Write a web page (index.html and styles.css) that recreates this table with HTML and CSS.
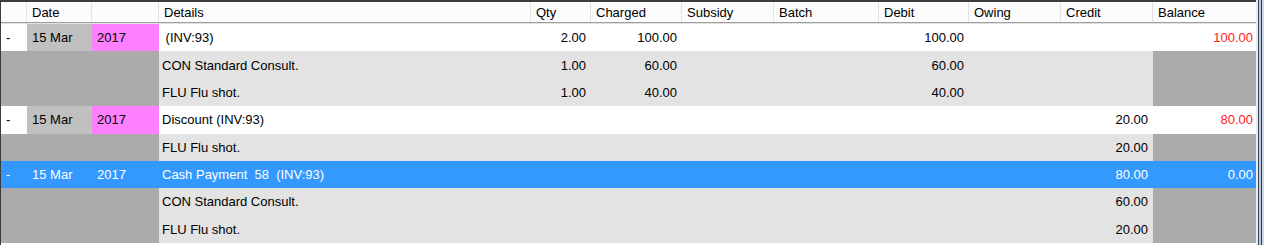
FILE: index.html
```html
<!DOCTYPE html>
<html>
<head>
<meta charset="utf-8">
<link rel="stylesheet" href="styles.css">
</head>
<body>
<div class="window">
  <div class="grid">
    <div class="row head">
      <div class="cell"></div>
      <div class="cell">Date</div>
      <div class="cell"></div>
      <div class="cell">Details</div>
      <div class="cell">Qty</div>
      <div class="cell">Charged</div>
      <div class="cell">Subsidy</div>
      <div class="cell">Batch</div>
      <div class="cell">Debit</div>
      <div class="cell">Owing</div>
      <div class="cell">Credit</div>
      <div class="cell">Balance</div>
    </div>

    <div class="row main">
      <div class="cell ind">-</div>
      <div class="cell date">15 Mar</div>
      <div class="cell year">2017</div>
      <div class="cell det"> (INV:93)</div>
      <div class="cell num">2.00</div>
      <div class="cell num">100.00</div>
      <div class="cell num"></div>
      <div class="cell num"></div>
      <div class="cell num">100.00</div>
      <div class="cell num"></div>
      <div class="cell num"></div>
      <div class="cell num bal red">100.00</div>
    </div>

    <div class="row sub">
      <div class="cell ind"></div>
      <div class="cell date"></div>
      <div class="cell year"></div>
      <div class="cell det">CON Standard Consult.</div>
      <div class="cell num">1.00</div>
      <div class="cell num">60.00</div>
      <div class="cell num"></div>
      <div class="cell num"></div>
      <div class="cell num">60.00</div>
      <div class="cell num"></div>
      <div class="cell num"></div>
      <div class="cell num bal"></div>
    </div>

    <div class="row sub">
      <div class="cell ind"></div>
      <div class="cell date"></div>
      <div class="cell year"></div>
      <div class="cell det">FLU Flu shot.</div>
      <div class="cell num">1.00</div>
      <div class="cell num">40.00</div>
      <div class="cell num"></div>
      <div class="cell num"></div>
      <div class="cell num">40.00</div>
      <div class="cell num"></div>
      <div class="cell num"></div>
      <div class="cell num bal"></div>
    </div>

    <div class="row main">
      <div class="cell ind">-</div>
      <div class="cell date">15 Mar</div>
      <div class="cell year">2017</div>
      <div class="cell det">Discount (INV:93)</div>
      <div class="cell num"></div>
      <div class="cell num"></div>
      <div class="cell num"></div>
      <div class="cell num"></div>
      <div class="cell num"></div>
      <div class="cell num"></div>
      <div class="cell num">20.00</div>
      <div class="cell num bal red">80.00</div>
    </div>

    <div class="row sub">
      <div class="cell ind"></div>
      <div class="cell date"></div>
      <div class="cell year"></div>
      <div class="cell det">FLU Flu shot.</div>
      <div class="cell num"></div>
      <div class="cell num"></div>
      <div class="cell num"></div>
      <div class="cell num"></div>
      <div class="cell num"></div>
      <div class="cell num"></div>
      <div class="cell num">20.00</div>
      <div class="cell num bal"></div>
    </div>

    <div class="row sel">
      <div class="cell ind">-</div>
      <div class="cell date">15 Mar</div>
      <div class="cell year">2017</div>
      <div class="cell det">Cash Payment  58  (INV:93)</div>
      <div class="cell num"></div>
      <div class="cell num"></div>
      <div class="cell num"></div>
      <div class="cell num"></div>
      <div class="cell num"></div>
      <div class="cell num"></div>
      <div class="cell num">80.00</div>
      <div class="cell num bal">0.00</div>
    </div>

    <div class="row sub">
      <div class="cell ind"></div>
      <div class="cell date"></div>
      <div class="cell year"></div>
      <div class="cell det">CON Standard Consult.</div>
      <div class="cell num"></div>
      <div class="cell num"></div>
      <div class="cell num"></div>
      <div class="cell num"></div>
      <div class="cell num"></div>
      <div class="cell num"></div>
      <div class="cell num">60.00</div>
      <div class="cell num bal"></div>
    </div>

    <div class="row sub">
      <div class="cell ind"></div>
      <div class="cell date"></div>
      <div class="cell year"></div>
      <div class="cell det">FLU Flu shot.</div>
      <div class="cell num"></div>
      <div class="cell num"></div>
      <div class="cell num"></div>
      <div class="cell num"></div>
      <div class="cell num"></div>
      <div class="cell num"></div>
      <div class="cell num">20.00</div>
      <div class="cell num bal"></div>
    </div>
  </div>
  <div class="frame"></div>
</div>
</body>
</html>
```

FILE: styles.css
```css
html, body {
  margin: 0;
  padding: 0;
  background: #ffffff;
}

body {
  font-family: "Liberation Sans", Arial, sans-serif;
  font-size: 13px;
  color: #000000;
}

.window {
  display: flex;
  width: 1264px;
  height: 245px;
  background: #ffffff;
}

.grid {
  width: 1255px;
  height: 243px;
  border-left: 1px solid #3c3c3c;
  border-top: 2px solid #3c3c3c;
  box-sizing: content-box;
  display: flex;
  flex-direction: column;
  align-self: flex-start;
}

.frame {
  width: 8px;
  height: 245px;
  background: linear-gradient(to right,
    #e8ecf0 0, #e8ecf0 2px,
    #3a4350 2px, #3a4350 3px,
    #b8cce4 3px, #b8cce4 5px,
    #2c3642 5px, #2c3642 6px,
    #cfd8e2 6px, #cfd8e2 8px);
}

.row {
  display: grid;
  grid-template-columns: 26px 65px 67px 372px 60px 91px 92px 105px 90px 92px 92px 103px;
  height: 27.375px;
  flex: 0 0 auto;
}

.cell {
  display: flex;
  align-items: center;
  white-space: pre;
  overflow: hidden;
  padding-left: 5px;
}

/* header */
.row.head {
  height: 20px;
  background: #fbfbfb;
  border-bottom: 1px solid #a0a0a0;
  box-shadow: 0 1px 0 #e0e0e0;
  margin-bottom: 1px;
}

.head .cell {
  border-right: 1px solid #e3e3e3;
  padding-left: 5px;
}

.head .cell:last-child {
  border-right: none;
}

/* common cells */
.ind {
  padding-left: 5px;
}

.det {
  padding-left: 3px;
}

.num {
  justify-content: flex-end;
  padding-left: 0;
  padding-right: 5px;
}

.num.bal {
  padding-right: 3px;
}

/* main rows */
.main {
  background: #ffffff;
}

.main .date {
  background: #c0c0c0;
}

.main .year {
  background: #ff80ff;
}

.red {
  color: #ff1a1a;
}

/* detail rows */
.sub {
  background: #e3e3e3;
}

.sub .ind,
.sub .date,
.sub .year,
.sub .bal {
  background: #ababab;
}

/* selected row */
.sel {
  background: #3399ff;
  color: #ffffff;
}
```
